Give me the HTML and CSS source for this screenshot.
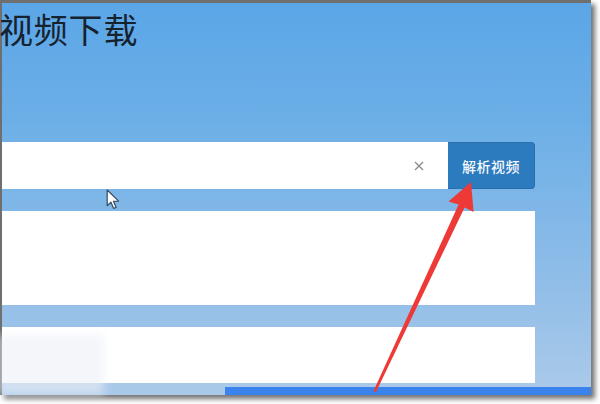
FILE: index.html
```html
<!DOCTYPE html>
<html lang="zh">
<head>
<meta charset="utf-8">
<title>视频下载</title>
<link rel="stylesheet" href="styles.css">
</head>
<body>
<div class="frame">
  <h1 class="title">视频下载</h1>
  <div class="column">
    <div class="search">
      <div class="input">
        <svg class="clear" width="10" height="10" viewBox="0 0 10 10"><path d="M1 1L9 9M9 1L1 9" stroke="#8a8a8a" stroke-width="1.3" fill="none"/></svg>
      </div>
      <div class="btn">解析视频</div>
    </div>
    <div class="card card-lg"></div>
    <div class="card card-sm"></div>
  </div>
  <div class="bar"></div>
  <div class="blur"></div>
  <svg class="cursor" width="17" height="23" viewBox="0 0 16 22"><path d="M1 1 L1 16 L4.6 12.6 L7.2 18.6 L9.6 17.6 L7 11.8 L12 11.6 Z" fill="#fff" stroke="#3b4f66" stroke-width="1.2" stroke-linejoin="round"/></svg>
  <svg class="arrow" width="600" height="404" viewBox="0 0 600 404"><polygon points="471,182 473.6,212 464.6,207.6 376,392 373.4,391.2 458.6,204.6 448.5,201.5" fill="#ee3a36"/></svg>
</div>
</body>
</html>
```

FILE: styles.css
```css
html, body {
  margin: 0;
  padding: 0;
  background: #ffffff;
  width: 600px;
  height: 404px;
  overflow: hidden;
}
.frame {
  position: relative;
  width: 589px;
  height: 392px;
  border-top: 3px solid #6f6f6f;
  border-left: 2px solid #6f6f6f;
  background: linear-gradient(180deg, #5ba6e7 0%, #6cafe7 30%, #8fbde8 70%, #abcae9 100%);
  box-shadow: 4px 4px 5px rgba(0, 0, 0, 0.55);
  display: flex;
  flex-direction: column;
  font-family: "Noto Sans CJK SC", "Noto Sans", sans-serif;
}
.title {
  margin: 0 0 0 -3px;
  padding-top: 9px;
  height: 34px;
  font-size: 34px;
  line-height: 34px;
  font-weight: 400;
  color: #17222f;
  letter-spacing: 0.8px;
}
.column {
  width: 533px;
  margin-top: 96px;
  display: flex;
  flex-direction: column;
  gap: 22px;
}
.search {
  display: flex;
  height: 47px;
}
.input {
  flex: 1;
  background: #ffffff;
  display: flex;
  align-items: center;
  justify-content: flex-end;
  padding-right: 24px;
}
.clear {
  display: block;
}
.btn {
  width: 86px;
  background: #2d7bbf;
  border: 1px solid #2a6ead;
  border-left: none;
  border-radius: 0 4px 4px 0;
  color: #f4f8fc;
  font-size: 14px;
  font-weight: 500;
  display: flex;
  align-items: center;
  justify-content: center;
  letter-spacing: 0.5px;
}
.card {
  background: #ffffff;
}
.card-lg {
  height: 94px;
}
.card-sm {
  height: 56px;
}
.bar {
  margin-top: 4px;
  margin-left: 223px;
  height: 8px;
  background: #3a83ec;
}
.blur {
  position: absolute;
  left: -4px;
  top: 332px;
  width: 106px;
  height: 60px;
  background: rgba(236, 240, 246, 0.6);
  filter: blur(4px);
}
.cursor {
  position: absolute;
  left: 104px;
  top: 186px;
}
.arrow {
  position: absolute;
  left: -2px;
  top: -3px;
  pointer-events: none;
}
```
